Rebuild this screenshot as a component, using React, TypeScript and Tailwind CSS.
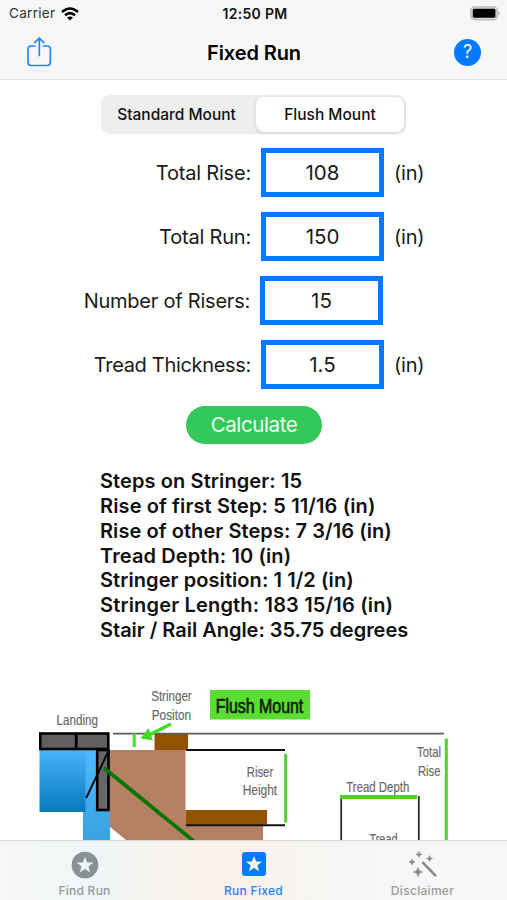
import React from "react";

const STAR = "M0 -8 L2 -2.6 L7.8 -2.5 L3.2 1 L4.8 6.6 L0 3.4 L-4.8 6.6 L-3.2 1 L-7.8 -2.5 L-2 -2.6 Z";
const SPARK = "M0 -4 Q.4 -.4 4 0 Q.4 .4 0 4 Q-.4 .4 -4 0 Q-.4 -.4 0 -4 Z";

type Field = { label: string; value: string; unit: string; shift: string };

const fields: Field[] = [
  { label: "Total Rise:", value: "108", unit: "(in)", shift: "w-[251px] tracking-[-0.2px]" },
  { label: "Total Run:", value: "150", unit: "(in)", shift: "w-[251px] tracking-[-0.2px]" },
  { label: "Number of Risers:", value: "15", unit: "", shift: "w-[250px] tracking-[-0.23px]" },
  { label: "Tread Thickness:", value: "1.5", unit: "(in)", shift: "w-[251px] tracking-[-0.32px]" },
];

const results: [string, string][] = [
  ["Steps on Stringer: 15", "tracking-[0.1px]"],
  ["Rise of first Step: 5 11/16 (in)", "tracking-[0.12px]"],
  ["Rise of other Steps: 7 3/16 (in)", "tracking-[0.07px]"],
  ["Tread Depth: 10 (in)", "tracking-[0.1px]"],
  ["Stringer position: 1 1/2 (in)", "tracking-[0.08px]"],
  ["Stringer Length: 183 15/16 (in)", "tracking-[0.17px]"],
  ["Stair / Rail Angle: 35.75 degrees", "tracking-[-0.02px]"],
];

function StatusBar() {
  return (
    <div className="grid h-[27px] grid-cols-3 items-center pl-[9px] pr-[6px] text-[13.5px] leading-none text-[#111]">
      <div className="flex items-center gap-[6px]">
        <span className="tracking-[0.3px] text-[#333]">Carrier</span>
        <svg width="18" height="14" viewBox="0 0 18 14" fill="none" stroke="#000" strokeWidth="2.5">
          <path d="M1 5 Q9 -2 17 5" />
          <path d="M4 8.3 Q9 4 14 8.3" />
          <path d="M9 13.4 L6 10.5 Q9 8.3 12 10.5 Z" fill="#000" stroke="none" />
        </svg>
      </div>
      <span className="text-center text-[14px] font-semibold tracking-[0.3px]">12:50 PM</span>
      <div className="flex justify-end">
        <svg width="31" height="16" viewBox="0 0 31 16">
          <rect x="0.8" y="0.8" width="26.6" height="13" rx="4" fill="#d8d8d8" stroke="#b8b8b8" strokeWidth="1.3" />
          <rect x="2.8" y="2.8" width="22.6" height="9" rx="1.5" fill="#000" />
          <path d="M28.5 5 Q31 7.3 28.5 9.5 Z" fill="#a5a5a5" />
        </svg>
      </div>
    </div>
  );
}

function NavBar() {
  return (
    <div className="flex h-[52px] items-center justify-between pl-[27px] pr-[26px]">
      <svg width="25" height="32" viewBox="0 0 25 32" className="-mt-[3px]" fill="none" stroke="#2486f7" strokeWidth="1.7" strokeLinecap="round" strokeLinejoin="round">
        <path d="M8 10 H4.2 Q1 10 1 13.2 V26.3 Q1 29.5 4.2 29.5 H20 Q23.4 29.5 23.4 26.3 V13.2 Q23.4 10 20 10 H16.5" />
        <path d="M12.3 19.5 V2.5 M7.8 6.6 L12.3 2 L16.8 6.6" />
      </svg>
      <h1 className="pb-px pl-[2px] text-[20px] font-semibold tracking-[-0.1px] text-black">Fixed Run</h1>
      <div className="mb-[2px] flex size-[27px] items-center justify-center rounded-full bg-[#007aff] text-[18px] leading-none text-white">?</div>
    </div>
  );
}

type LabelProps = { x: number; y: number; w: number; size?: number; color?: string; stroke?: string; weight?: number; children: string };

function Label({ x, y, w, size = 15.3, color = "#666", stroke = "#777", weight = 0.2, children }: LabelProps) {
  return (
    <text x={x} y={y} fontSize={size} fill={color} stroke={stroke} strokeWidth={weight} textLength={w} lengthAdjust="spacingAndGlyphs">
      {children}
    </text>
  );
}

function StairDiagram() {
  return (
    <svg width="507" height="160" viewBox="0 680 507 160" className="block font-['Liberation_Sans',sans-serif]">
      <defs>
        <linearGradient id="deep" x1="0" y1="0" x2="0" y2="1">
          <stop offset="0" stopColor="#48b4fa" />
          <stop offset="1" stopColor="#0679bd" />
        </linearGradient>
        <linearGradient id="light" x1="0" y1="0" x2="0" y2="1">
          <stop offset="0" stopColor="#50b9ff" />
          <stop offset="1" stopColor="#38a1df" />
        </linearGradient>
      </defs>
      <rect x="83" y="750" width="27" height="90" fill="url(#light)" />
      <rect x="39.5" y="750" width="46" height="62" fill="url(#deep)" />
      <path d="M109.5 750 H185.5 V824 H263 V840 H126 L109.5 826.5 Z" fill="#b58062" />
      <rect x="97.2" y="750" width="11.3" height="60" fill="#666" stroke="#000" strokeWidth="2.6" />
      <rect x="40.3" y="733.5" width="68" height="15.5" fill="#606060" stroke="#000" strokeWidth="2.6" />
      <path d="M76.2 733 V749" stroke="#000" strokeWidth="2.8" />
      <path d="M108.5 751 L86.2 798" stroke="#000" strokeWidth="1.8" />
      <rect x="154.5" y="734" width="33.5" height="16" fill="#945200" />
      <rect x="185.5" y="810" width="81.5" height="14.5" fill="#945200" />
      <path d="M113 733.6 H444" stroke="#5c5c5c" strokeWidth="1.8" />
      <path d="M186 750 H285 M186 825.2 H285" stroke="#111" strokeWidth="2" />
      <path d="M104 768 L193.5 841" stroke="#007400" strokeWidth="3.6" />
      <path d="M134.2 733.5 V747" stroke="#43dc29" strokeWidth="3" />
      <path d="M171 724 L149 735" stroke="#43dc29" strokeWidth="3.4" />
      <path d="M140.5 738.6 L148.5 728 L153 740.5 Z" fill="#43dc29" />
      <path d="M285.7 753.8 V822.5 M446.3 738.5 V840" stroke="#53cf35" strokeWidth="3" />
      <path d="M341.2 797 V840 M418.8 796 V840" stroke="#2d2d2d" strokeWidth="1.8" />
      <path d="M340 797 H417" stroke="#50cf30" strokeWidth="4" />
      <rect x="210" y="690" width="100" height="29.5" fill="#5bdc33" />
      <Label x={215.7} y={712.7} w={87.6} size={19.5} color="#101c0c" stroke="#101c0c" weight={0.7}>Flush Mount</Label>
      <Label x={56.5} y={725} w={41.5}>Landing</Label>
      <Label x={151.2} y={701} w={40.5}>Stringer</Label>
      <Label x={151.7} y={719.7} w={39.5}>Positon</Label>
      <Label x={246.7} y={776.5} w={26.5}>Riser</Label>
      <Label x={242.7} y={795} w={34.5}>Height</Label>
      <Label x={417} y={757} w={24}>Total</Label>
      <Label x={418} y={775.7} w={22.5}>Rise</Label>
      <Label x={346.3} y={792} w={63}>Tread Depth</Label>
      <Label x={369.5} y={844} w={28}>Tread</Label>
    </svg>
  );
}

function TabBar() {
  return (
    <nav className="grid h-[60px] grid-cols-3 border-t border-[#d5d8d8] bg-[linear-gradient(90deg,#f6f7f7_0%,#f3f6f7_10%,#eef6f7_19%,#f5f4f0_28%,#faf1ea_38%,#faf1ea_49%,#f6f4f1_60%,#f6f7f6_75%,#f7f7f7_100%)] text-[12px] leading-none font-medium">
      <div className="flex flex-col items-center gap-[6px] pt-[10px] tracking-[0.25px] text-[#939b9b]">
        <svg width="28" height="28" viewBox="-14 -14 28 28">
          <circle r="13.3" fill="#879292" />
          <path d={STAR} fill="#eef6f6" transform="translate(0 .3) scale(1.08)" />
        </svg>
        <span>Find Run</span>
      </div>
      <div className="flex flex-col items-center gap-[5px] pt-[9px] tracking-[0.3px] text-[#2184f8]">
        <svg width="28" height="30" viewBox="-14 -14 28 30">
          <rect x="-12" y="-12" width="24" height="24" rx="3" fill="#007aff" />
          <path d={STAR} fill="#fff4ec" transform="translate(0 .3) scale(1.04)" />
        </svg>
        <span>Run Fixed</span>
      </div>
      <div className="flex flex-col items-center gap-[6px] pt-[10px] tracking-[0.3px] text-[#9b9b9b]">
        <svg width="28" height="28" viewBox="0 0 28 28" fill="#878787">
          <path d="M13.4 11.2 L27 25.2" stroke="#878787" strokeWidth="2.5" />
          <path d={SPARK} transform="translate(10 3.5) scale(.75)" stroke="#878787" strokeWidth=".7" />
          <path d={SPARK} transform="translate(3 11) scale(.75)" stroke="#878787" strokeWidth=".7" />
          <path d={SPARK} transform="translate(20.5 7.5) scale(.75)" stroke="#878787" strokeWidth=".7" />
          <path d={SPARK} transform="translate(9 21) scale(1.1)" stroke="#878787" strokeWidth=".7" />
        </svg>
        <span>Disclaimer</span>
      </div>
    </nav>
  );
}

export default function App() {
  return (
    <div className="flex h-[900px] w-[507px] flex-col overflow-hidden bg-white font-['Inter',sans-serif] text-black">
      <header className="h-[80px] shrink-0 border-b border-[#e2e2e2] bg-[#f7f7f7]">
        <StatusBar />
        <NavBar />
      </header>
      <main className="flex h-[760px] shrink-0 flex-col overflow-hidden">
        <div className="mt-[15px] ml-[101px] flex h-[39px] w-[305px] rounded-[9px] bg-[#eeeeef] p-[2px] text-[15.5px] font-medium text-[#111]">
          <div className="flex w-[153px] items-center justify-center pr-[6px]">Standard Mount</div>
          <div className="flex flex-1 items-center justify-center rounded-[8px] bg-white shadow-[0_1px_4px_rgba(0,0,0,0.15)]">Flush Mount</div>
        </div>
        <div className="mt-[14px] flex flex-col gap-[15px] text-[20px] text-[#1a1a1a]">
          {fields.map((f) => (
            <div key={f.label} className="flex h-[49px] items-center">
              <span className={`${f.shift} text-right`}>{f.label}</span>
              <div className="ml-[10px] flex h-[49px] w-[123px] items-center justify-center border-[5px] border-[#007aff] pt-[2px] text-[20.5px]">
                {f.value}
              </div>
              <span className="ml-[10px] tracking-[-0.2px]">{f.unit}</span>
            </div>
          ))}
        </div>
        <button className="mt-[17px] ml-[186px] h-[38px] w-[136px] shrink-0 rounded-full bg-[#34c759] pt-px text-[20.5px] tracking-[-0.4px] text-[#effff2]">Calculate</button>
        <div className="mt-[25px] ml-[100px] flex flex-col text-[20px] leading-[24.85px] font-semibold text-[#111]">
          {results.map(([line, spacing]) => (
            <span key={line} className={`${spacing} whitespace-nowrap`}>{line}</span>
          ))}
        </div>
        <div className="mt-auto">
          <StairDiagram />
        </div>
      </main>
      <TabBar />
    </div>
  );
}
